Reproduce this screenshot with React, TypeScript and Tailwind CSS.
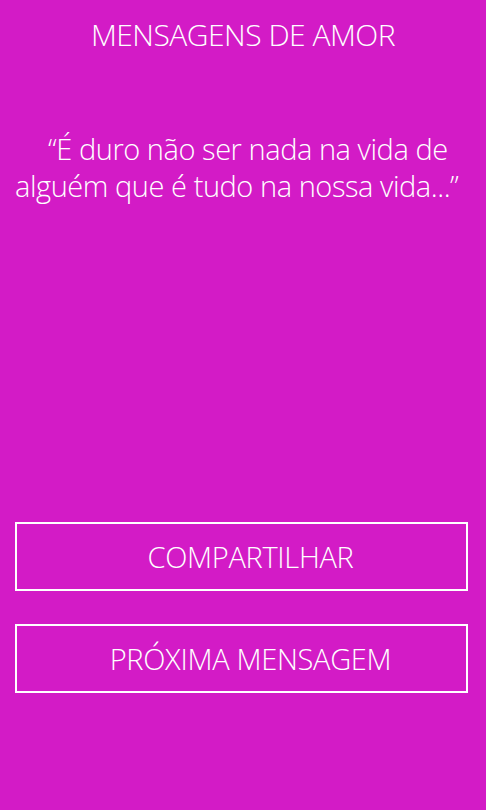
export default function App() {
  return (
    <div
      className="w-[486px] h-[810px] bg-[#d31bc6] text-white flex flex-col font-light"
      style={{ fontFamily: '"Open Sans", "Noto Sans", sans-serif' }}
    >
      <h1 className="pt-[17px] text-center text-[30px] leading-[36px] font-light tracking-[-0.5px]">
        MENSAGENS DE AMOR
      </h1>
      <p className="mt-[77px] px-[15px] indent-[33px] text-[29px] leading-[37px] tracking-[-0.45px]">
        “É duro não ser nada na vida de alguém que é tudo na nossa vida...”
      </p>
      <div className="mt-auto mb-[117px] pl-[15px] pr-[18px] flex flex-col gap-[33px]">
        <button className="h-[69px] border-2 border-white pl-[18px] text-[29px] font-light tracking-[-0.3px]">
          COMPARTILHAR
        </button>
        <button className="h-[69px] border-2 border-white pl-[18px] text-[29px] font-light tracking-[-0.3px]">
          PRÓXIMA MENSAGEM
        </button>
      </div>
    </div>
  );
}
